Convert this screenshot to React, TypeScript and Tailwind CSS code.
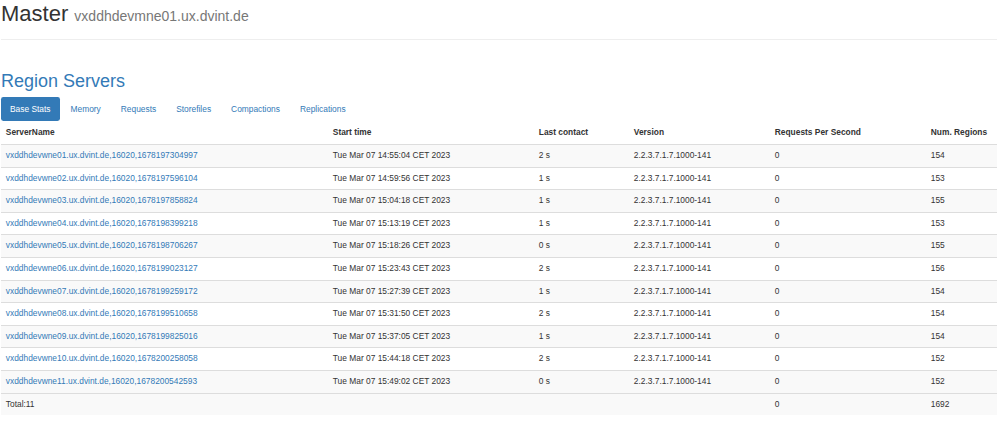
import React from 'react';

const servers = [
  ['01', '1678197304997', '14:55:04', '2 s', '154'],
  ['02', '1678197596104', '14:59:56', '1 s', '153'],
  ['03', '1678197858824', '15:04:18', '1 s', '155'],
  ['04', '1678198399218', '15:13:19', '1 s', '153'],
  ['05', '1678198706267', '15:18:26', '0 s', '155'],
  ['06', '1678199023127', '15:23:43', '2 s', '156'],
  ['07', '1678199259172', '15:27:39', '1 s', '154'],
  ['08', '1678199510658', '15:31:50', '2 s', '154'],
  ['09', '1678199825016', '15:37:05', '1 s', '154'],
  ['10', '1678200258058', '15:44:18', '2 s', '152'],
  ['11', '1678200542593', '15:49:02', '0 s', '152'],
];

const tabs = ['Base Stats', 'Memory', 'Requests', 'Storefiles', 'Compactions', 'Replications'];

const td = 'border-t border-[#ddd] px-[4.8px] py-[5px] leading-[11.6px] whitespace-nowrap';

export default function App() {
  return (
    <div className="min-h-[423px] bg-white px-[1px] font-['Liberation_Sans',Arial,sans-serif] text-[#333]">
      <div className="border-b border-[#eee] pb-[11px]">
        <h1 className="pt-[2px] text-[22px] leading-[24px] font-normal">
          Master <small className="text-[14px] text-[#777]">vxddhdevmne01.ux.dvint.de</small>
        </h1>
      </div>

      <h2 className="mt-[31px] text-[18px] leading-[20px] text-[#337ab7]">Region Servers</h2>

      <ul className="mt-[6px] flex gap-[2px] text-[8.4px] leading-[12px]">
        {tabs.map((t, i) => (
          <li
            key={t}
            className={
              i === 0
                ? 'rounded-[2.4px] bg-[#337ab7] px-[9px] py-[6px] text-white'
                : 'px-[9px] py-[6px] text-[#337ab7]'
            }
          >
            {t}
          </li>
        ))}
      </ul>

      <table className="w-full table-fixed border-collapse text-left text-[8.4px]">
        <colgroup>
          <col className="w-[327px]" />
          <col className="w-[206px]" />
          <col className="w-[95px]" />
          <col className="w-[141px]" />
          <col className="w-[156px]" />
          <col />
        </colgroup>
        <thead>
          <tr className="border-b border-[#ddd]">
            {['ServerName', 'Start time', 'Last contact', 'Version', 'Requests Per Second', 'Num. Regions'].map((h) => (
              <th key={h} className="px-[4.8px] pt-[5px] pb-[6px] leading-[12px] font-bold">
                {h}
              </th>
            ))}
          </tr>
        </thead>
        <tbody>
          {servers.map(([n, id, time, last, regions], i) => (
            <tr key={n} className={i % 2 === 0 ? 'bg-[#f9f9f9]' : 'bg-white'}>
              <td className={td}>
                <a className="text-[#337ab7]" href="#">
                  vxddhdevwne{n}.ux.dvint.de,16020,{id}
                </a>
              </td>
              <td className={td}>Tue Mar 07 {time} CET 2023</td>
              <td className={td}>{last}</td>
              <td className={td}>2.2.3.7.1.7.1000-141</td>
              <td className={td}>0</td>
              <td className={td}>{regions}</td>
            </tr>
          ))}
          <tr className="bg-[#f9f9f9]">
            <td className={td}>Total:11</td>
            <td className={td}></td>
            <td className={td}></td>
            <td className={td}></td>
            <td className={td}>0</td>
            <td className={td}>1692</td>
          </tr>
        </tbody>
      </table>
    </div>
  );
}
